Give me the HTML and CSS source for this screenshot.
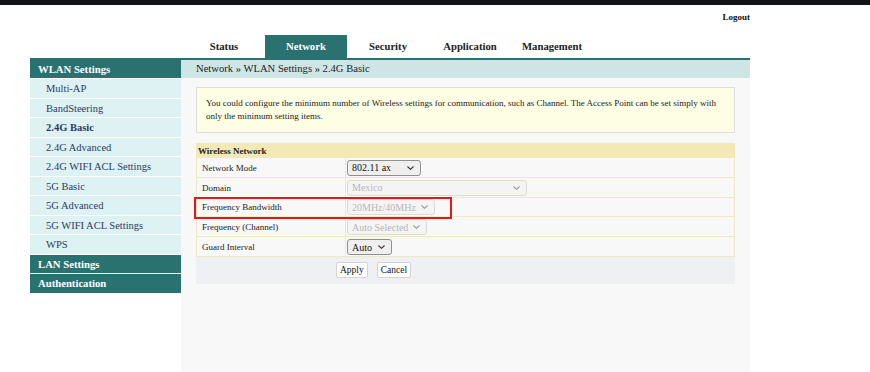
FILE: index.html
```html
<!DOCTYPE html>
<html lang="en">
<head>
    <meta charset="UTF-8">
    <title>2.4G Basic</title>
    <link rel="stylesheet" href="styles.css">
</head>
<body>
    <div class="topbar"></div>
    <div class="page">
        <div class="header">
            <a class="logout" href="#">Logout</a>
        </div>
        <ul class="tabs">
            <li>Status</li>
            <li class="active">Network</li>
            <li>Security</li>
            <li>Application</li>
            <li>Management</li>
        </ul>
        <div class="main">
            <!-- left menu -->
            <div class="sidebar">
                <div class="group first">WLAN Settings</div>
                <div class="item">Multi-AP</div>
                <div class="item">BandSteering</div>
                <div class="item current">2.4G Basic</div>
                <div class="item">2.4G Advanced</div>
                <div class="item">2.4G WIFI ACL Settings</div>
                <div class="item">5G Basic</div>
                <div class="item">5G Advanced</div>
                <div class="item">5G WIFI ACL Settings</div>
                <div class="item">WPS</div>
                <div class="group">LAN Settings</div>
                <div class="group">Authentication</div>
            </div>
            <!-- page body -->
            <div class="content">
                <div class="crumb">Network &raquo; WLAN Settings &raquo; 2.4G Basic</div>
                <div class="inner">
                    <div class="info">
                        You could configure the minimum number of Wireless settings for communication, such as Channel. The Access Point can be set simply with only the minimum setting items.
                    </div>
                    <div class="form-wrap">
                        <table class="form">
                            <tr class="head">
                                <td colspan="2">Wireless Network</td>
                            </tr>
                            <tr>
                                <td class="label">Network Mode</td>
                                <td>
                                    <span class="select w-mode">
                                        <select><option>802.11 ax</option></select>
                                        <svg class="chev" width="7" height="4" viewBox="0 0 7 4"><path d="M0.5 0.5 L3.5 3.3 L6.5 0.5" fill="none" stroke="currentColor" stroke-width="1.1"/></svg>
                                    </span>
                                </td>
                            </tr>
                            <tr>
                                <td class="label">Domain</td>
                                <td>
                                    <span class="select w-domain off">
                                        <select disabled><option>Mexico</option></select>
                                        <svg class="chev" width="7" height="4" viewBox="0 0 7 4"><path d="M0.5 0.5 L3.5 3.3 L6.5 0.5" fill="none" stroke="currentColor" stroke-width="1.1"/></svg>
                                    </span>
                                </td>
                            </tr>
                            <tr>
                                <td class="label">Frequency Bandwidth</td>
                                <td>
                                    <span class="select w-bw off">
                                        <select disabled><option>20MHz/40MHz</option></select>
                                        <svg class="chev" width="7" height="4" viewBox="0 0 7 4"><path d="M0.5 0.5 L3.5 3.3 L6.5 0.5" fill="none" stroke="currentColor" stroke-width="1.1"/></svg>
                                    </span>
                                </td>
                            </tr>
                            <tr>
                                <td class="label">Frequency (Channel)</td>
                                <td>
                                    <span class="select w-chan off">
                                        <select disabled><option>Auto Selected</option></select>
                                        <svg class="chev" width="7" height="4" viewBox="0 0 7 4"><path d="M0.5 0.5 L3.5 3.3 L6.5 0.5" fill="none" stroke="currentColor" stroke-width="1.1"/></svg>
                                    </span>
                                </td>
                            </tr>
                            <tr>
                                <td class="label">Guard Interval</td>
                                <td>
                                    <span class="select w-gi">
                                        <select><option>Auto</option></select>
                                        <svg class="chev" width="7" height="4" viewBox="0 0 7 4"><path d="M0.5 0.5 L3.5 3.3 L6.5 0.5" fill="none" stroke="currentColor" stroke-width="1.1"/></svg>
                                    </span>
                                </td>
                            </tr>
                            <tr class="actions">
                                <td colspan="2">
                                    <div class="buttons">
                                        <button>Apply</button>
                                        <button>Cancel</button>
                                    </div>
                                </td>
                            </tr>
                        </table>
                        <div class="highlight"></div>
                    </div>
                </div>
            </div>
        </div>
    </div>
</body>
</html>
```

FILE: styles.css
```css
body {
    margin: 0;
    padding: 0;
    font-family: "Liberation Serif", "Times New Roman", serif;
    background-color: #fff;
    color: #222;
}

.topbar {
    height: 5px;
    background-color: #111314;
}

.page {
    margin-left: 30px;
    width: 720px;
}

.header {
    height: 30px;
    text-align: right;
    padding-top: 1px;
    box-sizing: border-box;
}

.logout {
    font-size: 9px;
    line-height: 11px;
    font-weight: bold;
    color: #111;
    text-decoration: none;
}

.tabs {
    list-style: none;
    margin: 0;
    padding: 0 0 0 153px;
    display: flex;
    height: 23px;
}

.tabs li {
    width: 82px;
    text-align: center;
    font-size: 10.7px;
    font-weight: bold;
    line-height: 23px;
    color: #222;
}

.tabs li.active {
    background-color: #2a7270;
    color: #fff;
}

.main {
    display: flex;
    border-top: 2px solid #2a7270;
    min-height: calc(100vh - 60px);
}

.sidebar {
    width: 151px;
    flex-shrink: 0;
}

.group {
    height: 19.5px;
    line-height: 19px;
    padding-left: 8px;
    border-top: 1px solid #fff;
    box-sizing: border-box;
    background-color: #2a7270;
    color: #fff;
    font-size: 10.7px;
    font-weight: bold;
}

.group.first {
    height: 18px;
    line-height: 18px;
    border-top: none;
}

.item {
    height: 19.5px;
    line-height: 19px;
    padding-left: 16px;
    border-top: 1px solid #fff;
    box-sizing: border-box;
    background-color: #def1f3;
    color: #2b3c63;
    font-size: 10.5px;
}

.item.current {
    font-weight: bold;
}

.content {
    flex: 1;
    background-color: #f8f8f8;
}

.crumb {
    height: 18px;
    line-height: 18px;
    padding-left: 15px;
    background-color: #cde5e5;
    font-size: 10.6px;
    color: #1d1d1d;
}

.inner {
    padding: 9px 15px 0 15px;
}

.info {
    background-color: #fefee4;
    border: 1px solid #dcdfe2;
    padding: 9px 9px;
    font-size: 9px;
    line-height: 13px;
    color: #222;
}

.form-wrap {
    position: relative;
    margin-top: 10px;
}

.form {
    width: 100%;
    border-collapse: collapse;
    font-size: 9px;
}

.form td {
    border: 1px solid #f0e8c4;
    background-color: #f8f8f8;
    height: 19.8px;
    padding: 1px 1px 0 1px;
    box-sizing: border-box;
}

.form .head td {
    height: 14px;
    padding: 0 1px;
    background-color: #f2e9b7;
    font-weight: bold;
    border-color: #f2e9b7;
}

.form td.label {
    width: 149px;
    padding-left: 5px;
}

.select {
    position: relative;
    display: inline-block;
    vertical-align: middle;
    color: #333;
}

.select select {
    display: block;
    width: 100%;
    -webkit-appearance: none;
    appearance: none;
    font-family: "Liberation Serif", "Times New Roman", serif;
    font-size: 10px;
    height: 16px;
    padding: 0 3px 0 4px;
    border: 1px solid #8f8f8f;
    border-radius: 3px;
    background-color: #efefef;
    color: #111;
}

.select.off {
    color: #999;
}

.select select:disabled {
    border-color: #d0d0d0;
    background-color: #f3f3f3;
    color: #9a9a9a;
}

.chev {
    position: absolute;
    right: 7px;
    top: 6px;
    pointer-events: none;
}

.w-mode { width: 74px; }
.w-domain { width: 180px; }
.w-bw { width: 88px; }
.w-chan { width: 80px; }
.w-gi { width: 45px; }

.form .actions td {
    height: 27px;
    background-color: #eef0f4;
    border-color: #eef0f4;
    padding: 0;
}

.buttons {
    display: flex;
    gap: 9px;
    padding-left: 139px;
}

.buttons button {
    font-family: "Liberation Serif", "Times New Roman", serif;
    font-size: 9.5px;
    height: 16px;
    padding: 0 3px;
    background-color: #fff;
    color: #111;
    border: 1px solid #d3d3d3;
    border-radius: 2px;
}

/* 빨간 강조 표시 */
.highlight {
    position: absolute;
    left: -2px;
    top: 54px;
    width: 258px;
    height: 22px;
    border: 2px solid #e11919;
    box-sizing: border-box;
}
```
